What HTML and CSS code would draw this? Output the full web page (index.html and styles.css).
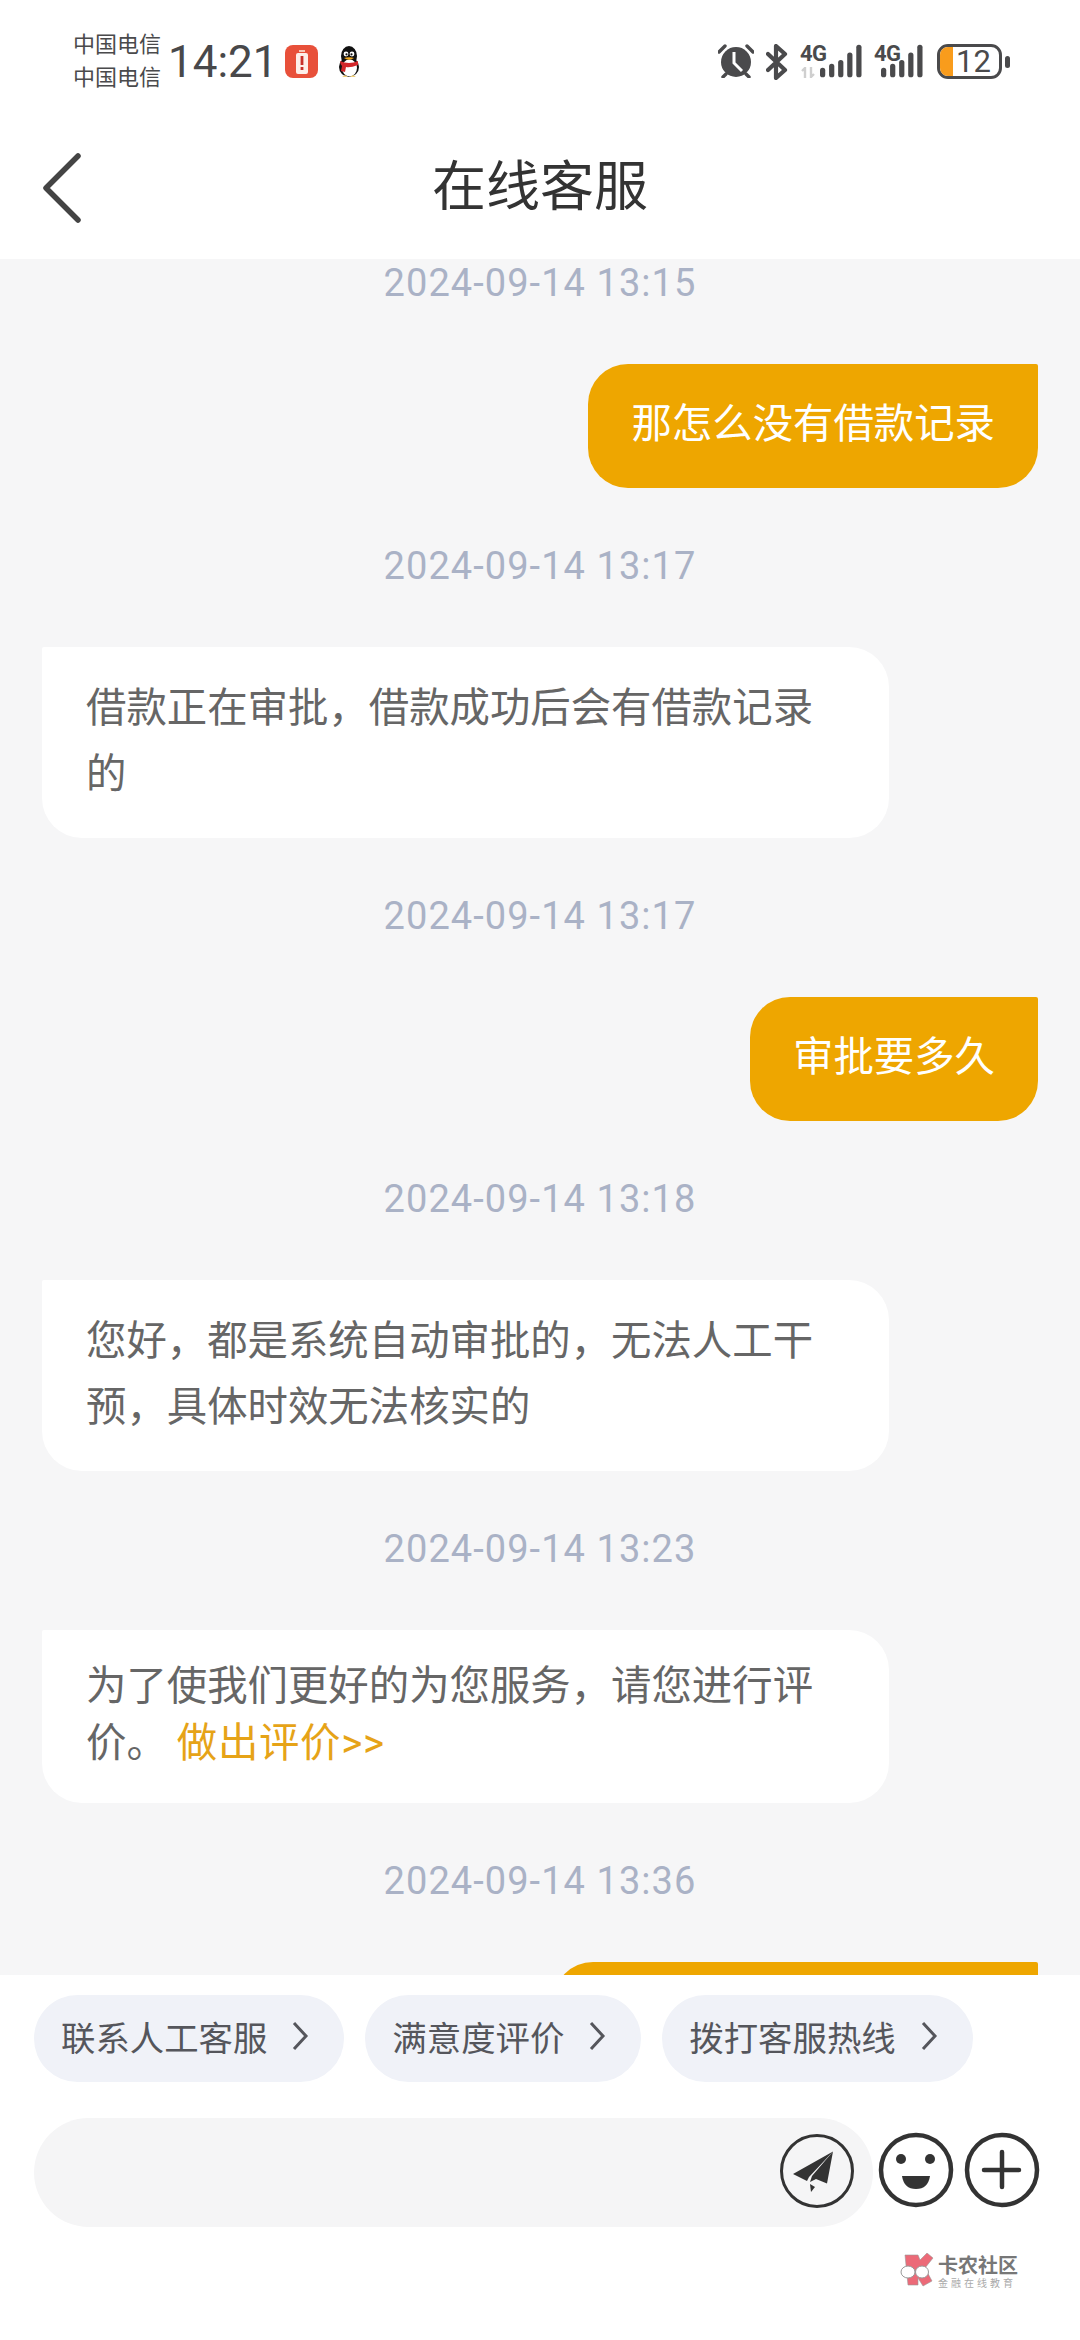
FILE: index.html
```html
<!DOCTYPE html>
<html lang="zh">
<head>
    <meta charset="UTF-8">
    <meta name="viewport" content="width=device-width, initial-scale=1.0">
    <title>在线客服</title>
    <link rel="stylesheet" href="styles.css">
</head>
<body>
<div class="phone">
    <div class="status-bar">
        <div class="carriers">
            <div>中国电信</div>
            <div>中国电信</div>
        </div>
        <div class="clock">14:21</div>
        <div class="battery-app">
            <svg width="12" height="24" viewBox="0 0 12 24">
                <rect x="3" y="0" width="6" height="2" fill="#f6c8b8"/>
                <rect x="0" y="3" width="12" height="21" rx="2" fill="#fdeee9"/>
                <rect x="4.6" y="6" width="2.8" height="9" fill="#c8302a"/>
                <rect x="4.6" y="17" width="2.8" height="3" fill="#c8302a"/>
            </svg>
        </div>
        <svg class="penguin" width="24" height="32" viewBox="0 0 24 32">
            <ellipse cx="12" cy="21" rx="10" ry="10" fill="#111"/>
            <ellipse cx="12" cy="10" rx="8" ry="10" fill="#111"/>
            <ellipse cx="12.5" cy="22" rx="7.5" ry="8.5" fill="#fff"/>
            <path d="M3 15 Q12 19 21 15 L21 19 Q13 22 9 21 L8 26 L4 25 L5 20 Q3 18 3 15Z" fill="#d3272b"/>
            <circle cx="9" cy="8" r="2.4" fill="#fff"/>
            <circle cx="15" cy="8" r="2.4" fill="#fff"/>
            <circle cx="9.5" cy="8.3" r="1.1" fill="#111"/>
            <circle cx="14.5" cy="8.3" r="1.1" fill="#111"/>
            <path d="M7 12 Q12 10.5 17 12 Q12 15.5 7 12Z" fill="#f2a81d"/>
            <path d="M5 31 L11 31 L8 29Z M13 31 L19 31 L16 29Z" fill="#f2d27d"/>
        </svg>
        <div class="status-right">
            <svg width="36" height="34" viewBox="0 0 36 34">
                <path d="M1 8 L7 2 M35 8 L29 2 M8 30 L5 33 M28 30 L31 33" stroke="#4a4a4c" stroke-width="3.4" stroke-linecap="round"/>
                <circle cx="18" cy="18" r="15" fill="#4a4a4c"/>
                <path d="M16 8 V19 L24 27" fill="none" stroke="#fff" stroke-width="3"/>
            </svg>
            <svg class="bt" width="22" height="36" viewBox="0 0 22 36">
                <path d="M2 10 L19 26 L10 34 V2 L19 10 L2 26" fill="none" stroke="#4a4a4c" stroke-width="4.2" stroke-linecap="round" stroke-linejoin="round"/>
            </svg>
            <div class="signal signal-first">
                <span class="net">4G</span>
                <svg class="updown" width="14" height="11" viewBox="0 0 14 11">
                    <path d="M4 11 V1 L1 4 M10 0 V10 L13 7" fill="none" stroke="#cfcfcf" stroke-width="2.4"/>
                </svg>
                <svg class="bars" width="42" height="34" viewBox="0 0 44 34">
                    <rect x="0" y="24" width="5.5" height="10" rx="2.7" fill="#4a4a4c"/>
                    <rect x="9.5" y="20" width="5.5" height="14" rx="2.7" fill="#4a4a4c"/>
                    <rect x="19" y="16" width="5.5" height="18" rx="2.7" fill="#4a4a4c"/>
                    <rect x="28.5" y="8" width="5.5" height="26" rx="2.7" fill="#4a4a4c"/>
                    <rect x="38" y="0" width="5.5" height="34" rx="2.7" fill="#4a4a4c"/>
                </svg>
            </div>
            <div class="signal signal-second">
                <span class="net">4G</span>
                <svg class="bars" width="42" height="34" viewBox="0 0 44 34">
                    <rect x="0" y="24" width="5.5" height="10" rx="2.7" fill="#4a4a4c"/>
                    <rect x="9.5" y="20" width="5.5" height="14" rx="2.7" fill="#4a4a4c"/>
                    <rect x="19" y="16" width="5.5" height="18" rx="2.7" fill="#4a4a4c"/>
                    <rect x="28.5" y="8" width="5.5" height="26" rx="2.7" fill="#4a4a4c"/>
                    <rect x="38" y="0" width="5.5" height="34" rx="2.7" fill="#4a4a4c"/>
                </svg>
            </div>
            <div class="battery">
                <div class="battery-body">
                    <div class="battery-level"></div>
                    <span class="battery-num">12</span>
                </div>
                <div class="battery-tip"></div>
            </div>
        </div>
    </div>

    <div class="header">
        <svg class="back" width="42" height="70" viewBox="0 0 42 70">
            <path d="M37 3 L5 35 L37 67" fill="none" stroke="#444" stroke-width="5.5" stroke-linecap="round" stroke-linejoin="round"/>
        </svg>
        <div class="title">在线客服</div>
    </div>

    <div class="chat">
        <div class="time time-first">2024-09-14 13:15</div>
        <div class="msg msg-me">那怎么没有借款记录</div>
        <div class="time">2024-09-14 13:17</div>
        <div class="msg msg-kf">借款正在审批，借款成功后会有借款记录的</div>
        <div class="time">2024-09-14 13:17</div>
        <div class="msg msg-me">审批要多久</div>
        <div class="time">2024-09-14 13:18</div>
        <div class="msg msg-kf">您好，都是系统自动审批的，无法人工干预，具体时效无法核实的</div>
        <div class="time">2024-09-14 13:23</div>
        <div class="msg msg-kf msg-tight">为了使我们更好的为您服务，请您进行评价。 <span class="link">做出评价&gt;&gt;</span></div>
        <div class="time">2024-09-14 13:36</div>
        <div class="msg msg-me msg-cut">&nbsp;</div>
    </div>

    <div class="bottom">
        <div class="chips">
            <div class="chip">联系人工客服<svg width="18" height="30" viewBox="0 0 18 30"><path d="M3 2 L15 15 L3 28" fill="none" stroke="#55565c" stroke-width="3"/></svg></div>
            <div class="chip">满意度评价<svg width="18" height="30" viewBox="0 0 18 30"><path d="M3 2 L15 15 L3 28" fill="none" stroke="#55565c" stroke-width="3"/></svg></div>
            <div class="chip">拨打客服热线<svg width="18" height="30" viewBox="0 0 18 30"><path d="M3 2 L15 15 L3 28" fill="none" stroke="#55565c" stroke-width="3"/></svg></div>
        </div>
        <div class="input-row">
            <div class="input">
                <svg class="send" width="76" height="76" viewBox="0 0 76 76">
                    <circle cx="38" cy="38" r="35.5" fill="none" stroke="#333" stroke-width="3"/>
                    <path d="M14 41 L54 18.500 L30 44 L28 48Z" fill="#333"/>
                    <path d="M54 18.500 L48 50.500 L37 46 L31 49 L33 43Z" fill="#333"/>
                    <path d="M31 51 L36 54 L32 59Z" fill="#333"/>
                </svg>
            </div>
            <svg class="tool" width="76" height="76" viewBox="0 0 76 76">
                <circle cx="38" cy="38" r="35" fill="none" stroke="#333" stroke-width="4.5"/>
                <circle cx="23" cy="27" r="5" fill="#333"/>
                <circle cx="52" cy="27" r="5" fill="#333"/>
                <path d="M24 44 H52 Q50 57 38 57 Q26 57 24 44Z" fill="#333"/>
            </svg>
            <svg class="tool tool-plus" width="76" height="76" viewBox="0 0 76 76">
                <circle cx="38" cy="38" r="35" fill="none" stroke="#333" stroke-width="4.5"/>
                <path d="M38 20 V55 M20 38 H55" stroke="#333" stroke-width="4.5" stroke-linecap="round"/>
            </svg>
        </div>
    </div>

    <div class="watermark">
        <svg width="36" height="36" viewBox="0 0 36 36">
            <path d="M5 2 H18 L20 7 L27 0 L33 5 L25 15 L32 28 L23 33 L18 25 V32 H8Z" fill="#ec6a78" stroke="#999" stroke-width="0.6"/>
            <ellipse cx="8" cy="19" rx="7" ry="6" fill="#fff" stroke="#999" stroke-width="1"/>
            <ellipse cx="22" cy="19" rx="6.5" ry="6" fill="#fff" stroke="#999" stroke-width="1"/>
        </svg>
        <div class="wm-text">
            <div class="wm-name">卡农社区</div>
            <div class="wm-sub">金融在线教育</div>
        </div>
    </div>
</div>
</body>
</html>
```

FILE: styles.css
```css
* {
    box-sizing: border-box;
}
body {
    margin: 0;
    background: #fff;
    font-family: "Roboto", "Noto Sans CJK SC", sans-serif;
}
.phone {
    width: 1080px;
    height: 2340px;
    background: #fff;
    position: relative;
    overflow: hidden;
    display: flex;
    flex-direction: column;
}

/* status bar */
.status-bar {
    height: 120px;
    padding: 28px 70px 0 73px;
    display: flex;
    align-items: flex-start;
    color: #444;
}
.carriers {
    font-size: 22px;
    line-height: 33px;
    width: 95px;
    flex-shrink: 0;
    color: #4a4a4c;
}
.clock {
    font-size: 44px;
    line-height: 54px;
    width: 117px;
    margin-top: 7px;
    color: #48484a;
}
.battery-app {
    width: 33px;
    height: 33px;
    margin-top: 17px;
    background: #e8503a;
    border-radius: 8px;
    display: flex;
    align-items: center;
    justify-content: center;
}
.penguin {
    margin: 18px 0 0 19px;
}
.status-right {
    margin-left: auto;
    display: flex;
    align-items: flex-start;
    padding-top: 16px;
}
.bt {
    margin: 0 12px;
}
.signal {
    position: relative;
    width: 62px;
    height: 36px;
    margin-right: 12px;
}
.signal-second {
    width: 49px;
    margin-right: 14px;
}
.net {
    position: absolute;
    left: 0;
    top: 0;
    font-size: 22px;
    line-height: 20px;
    font-weight: 700;
    color: #4a4a4c;
    letter-spacing: -0.5px;
}
.updown {
    position: absolute;
    left: 1px;
    top: 23px;
}
.bars {
    position: absolute;
    right: 0;
    top: 0;
}
.battery {
    display: flex;
    align-items: center;
}
.battery-body {
    width: 65px;
    height: 35px;
    border: 3px solid #4a4a4c;
    border-radius: 11px;
    position: relative;
    overflow: hidden;
    display: flex;
    align-items: center;
    justify-content: center;
}
.battery-level {
    position: absolute;
    left: 0;
    top: 0;
    bottom: 0;
    width: 13px;
    background: #f99c1c;
}
.battery-num {
    position: relative;
    font-size: 31px;
    line-height: 29px;
    color: #4a4a4c;
    padding-left: 8px;
}
.battery-tip {
    width: 5px;
    height: 12px;
    margin-left: 3px;
    border-radius: 3px;
    background: #4a4a4c;
}

/* header */
.header {
    height: 139px;
    position: relative;
    display: flex;
    align-items: center;
    justify-content: center;
}
.back {
    position: absolute;
    left: 41px;
    top: 33px;
}
.title {
    font-size: 54px;
    color: #333;
    line-height: 70px;
    margin-top: -3px;
}

/* chat list */
.chat {
    height: 1716px;
    background: #f6f6f7;
    overflow: hidden;
    padding: 0 42px 0 42px;
    display: flex;
    flex-direction: column;
}
.time {
    text-align: center;
    font-size: 38px;
    line-height: 46px;
    letter-spacing: 1.06px;
    color: #aab2c6;
    margin: 55px 0 58px;
    flex-shrink: 0;
}
.time-first {
    margin-top: 1px;
}
.msg {
    font-size: 40.4px;
    flex-shrink: 0;
}
.msg-me {
    align-self: flex-end;
    background: #eea600;
    color: #fff;
    padding: 0 43px;
    height: 124px;
    line-height: 122px;
    border-radius: 40px 2px 40px 40px;
}
.msg-cut {
    width: 485px;
}
.msg-kf {
    align-self: flex-start;
    width: 847px;
    background: #fff;
    color: #666;
    padding: 29px 44px 30px;
    line-height: 66px;
    border-radius: 2px 40px 40px 40px;
}
.msg-tight {
    padding-top: 28px;
    padding-bottom: 31px;
    line-height: 57px;
}
.link {
    color: #e6a317;
    letter-spacing: 0.7px;
}

/* bottom bar */
.bottom {
    flex: 1;
    padding: 20px 40px 0 34px;
}
.chips {
    display: flex;
    gap: 21px;
}
.chip {
    height: 87px;
    padding: 0 35px 5px 27px;
    border-radius: 44px;
    background: #f0f2f8;
    color: #55565c;
    font-size: 34.4px;
    display: flex;
    align-items: center;
    gap: 24px;
}
.input-row {
    margin-top: 36px;
    display: flex;
    align-items: flex-start;
    gap: 5px;
}
.input {
    width: 839px;
    height: 109px;
    background: #f5f5f6;
    border-radius: 55px;
    display: flex;
    align-items: center;
    justify-content: flex-end;
    padding-right: 18px;
}
.send {
    margin-bottom: 4px;
}
.tool {
    margin-top: 14px;
}
.tool-plus {
    margin-left: 5px;
}

/* watermark */
.watermark {
    position: absolute;
    left: 900px;
    top: 2253px;
    display: flex;
    gap: 2px;
}
.wm-name {
    font-size: 20px;
    line-height: 22px;
    font-weight: 700;
    color: #777;
    margin-top: 2px;
}
.wm-sub {
    font-size: 10px;
    line-height: 14px;
    letter-spacing: 3px;
    color: #aaa;
}
```
